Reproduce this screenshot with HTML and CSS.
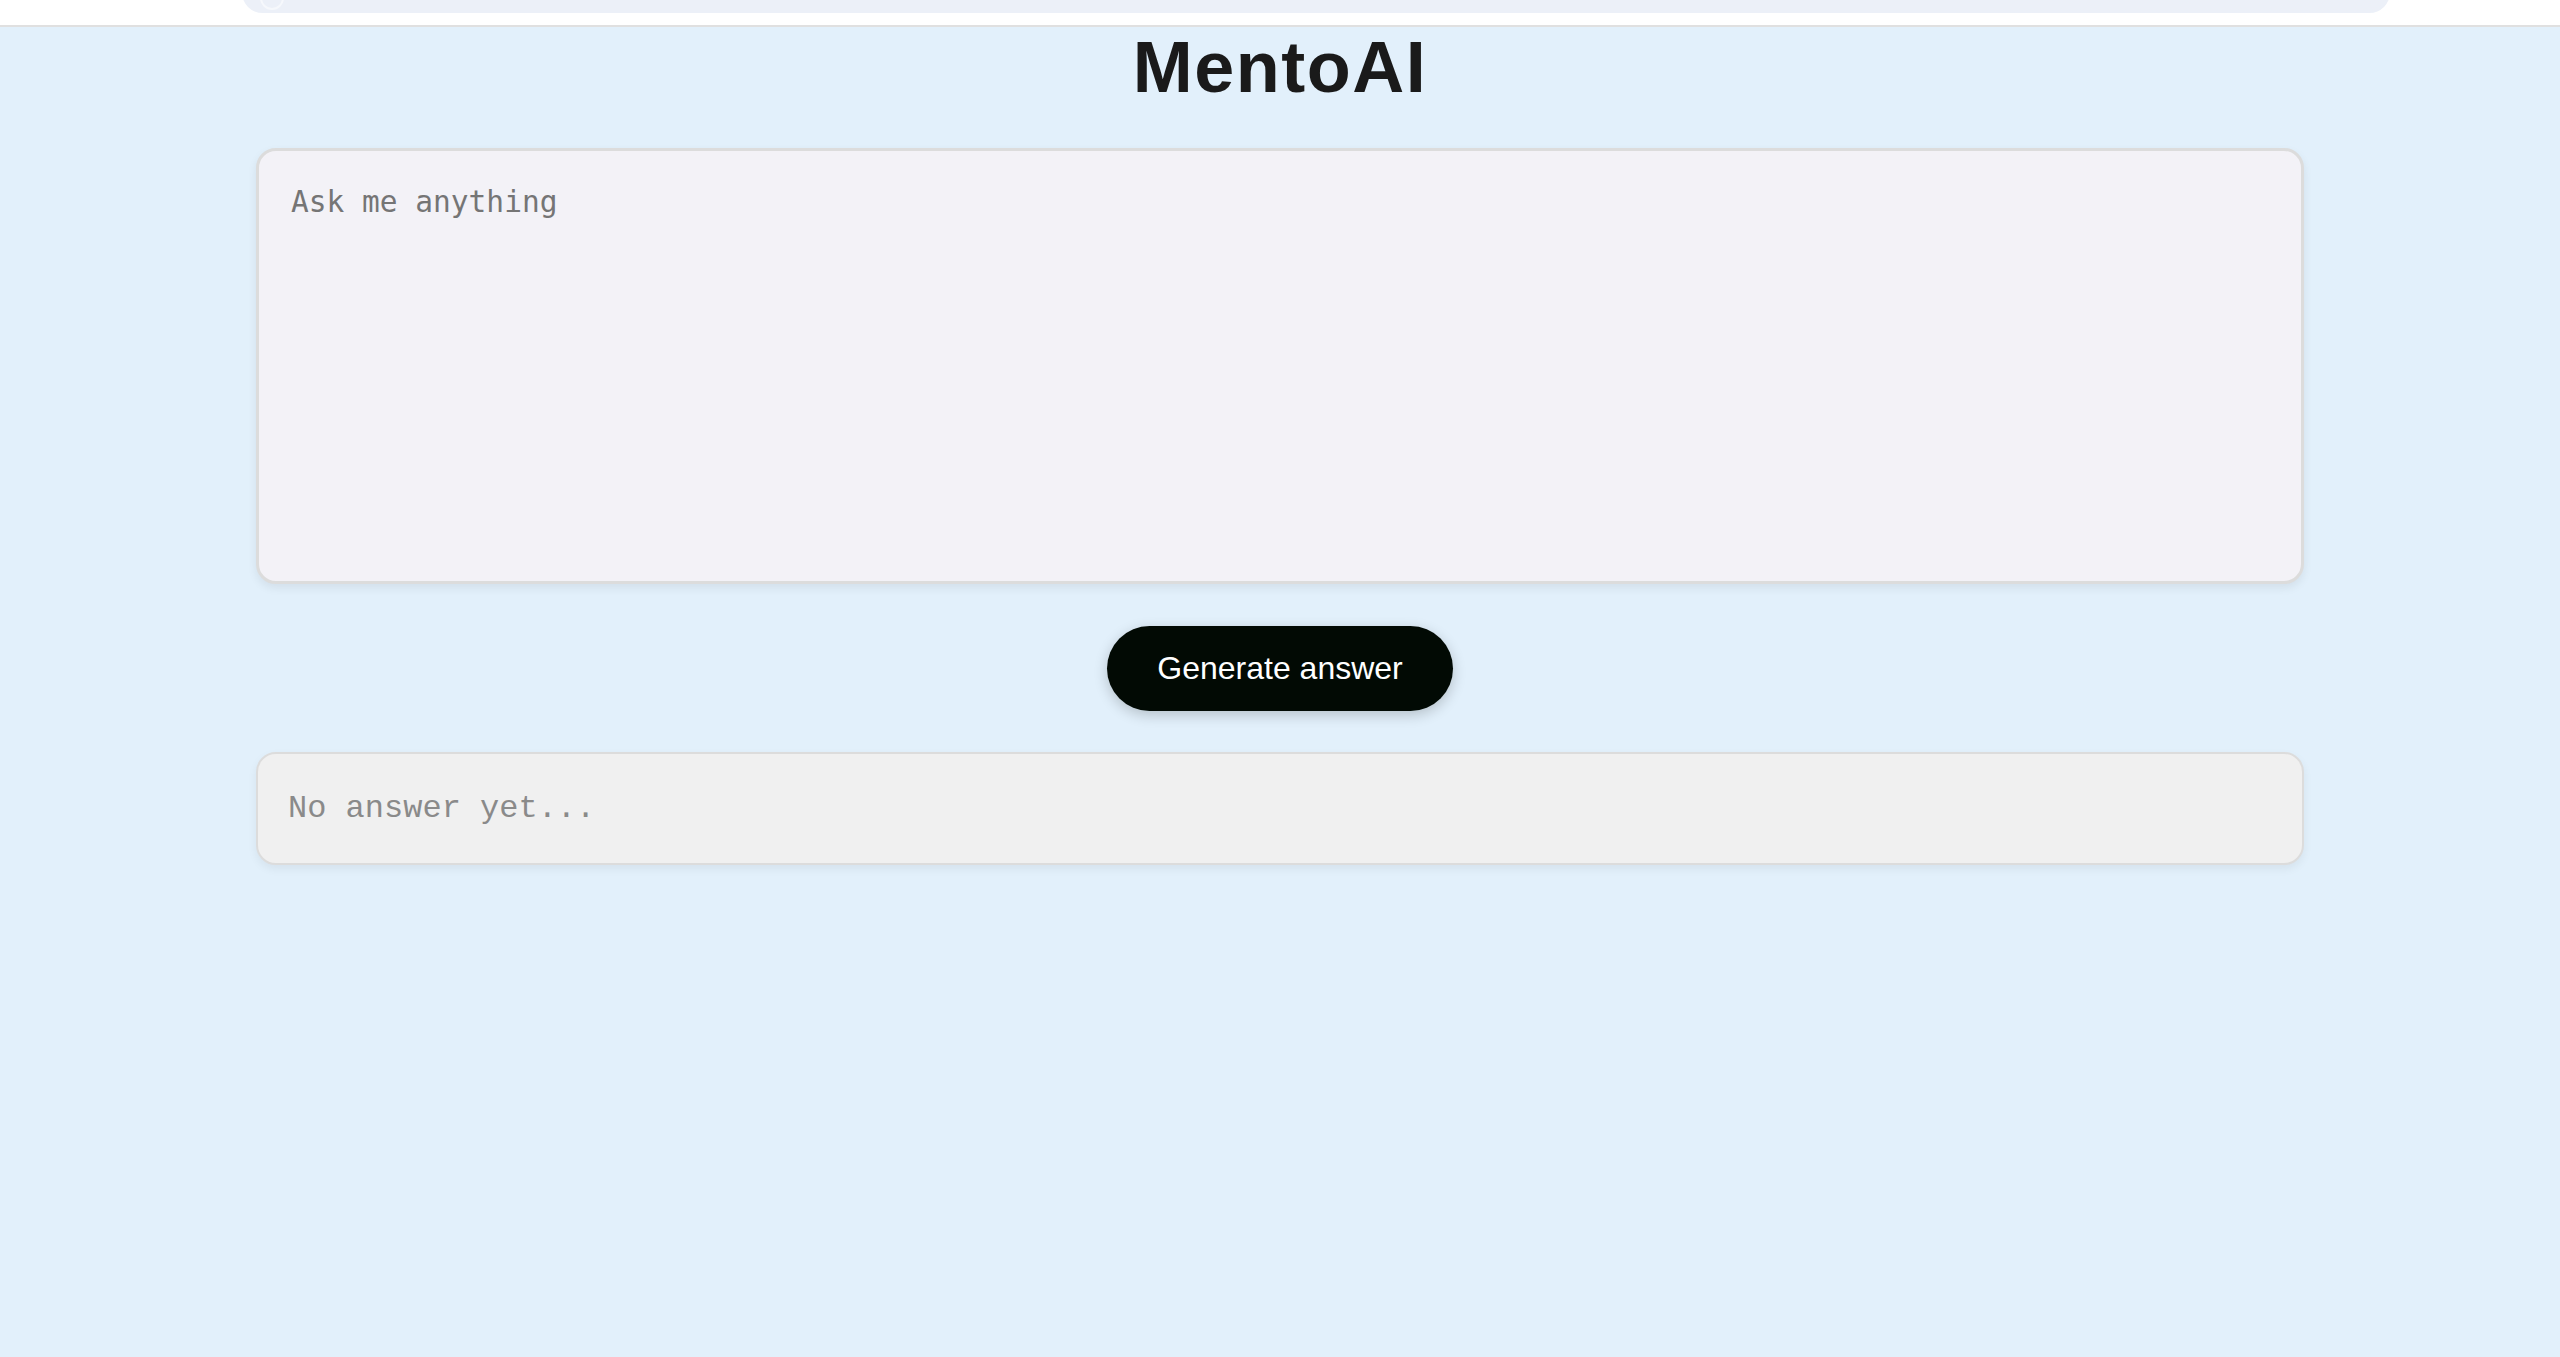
FILE: index.html
```html
<!DOCTYPE html>
<html lang="en">
<head>
<meta charset="utf-8">
<title>MentoAI</title>
<link rel="stylesheet" href="styles.css">
</head>
<body>
<header class="topbar">
  <div class="search-pill"><span class="search-dot"></span></div>
</header>
<main class="app">
  <h1 class="title">MentoAI</h1>
  <textarea class="question" placeholder="Ask me anything"></textarea>
  <button class="generate" type="button">Generate answer</button>
  <div class="answer">No answer yet...</div>
</main>
</body>
</html>
```
FILE: styles.css
```css
html, body {
  margin: 0;
  padding: 0;
}
body {
  background: #e2f0fb;
  min-height: 100vh;
  font-family: "Liberation Sans", Arial, sans-serif;
}
.topbar {
  height: 25px;
  background: #ffffff;
  border-bottom: 2px solid #e0e0e0;
  overflow: hidden;
}
.search-pill {
  margin-left: 242px;
  margin-top: -28px;
  width: 2148px;
  height: 41px;
  background: #ecf0f8;
  border-radius: 24px;
  position: relative;
}
.search-dot {
  position: absolute;
  left: 18px;
  top: 14px;
  width: 24px;
  height: 24px;
  border-radius: 50%;
  border: 2px solid #f6f8fc;
  box-sizing: border-box;
}
.app {
  display: flex;
  flex-direction: column;
  align-items: center;
}
.title {
  margin: 0 0 41px;
  font-family: "Liberation Sans", Arial, sans-serif;
  font-weight: 700;
  font-size: 72px;
  line-height: 80px;
  color: #1a1a1a;
  letter-spacing: 1.5px;
}
.question {
  box-sizing: border-box;
  width: 80%;
  height: 436px;
  margin: 0;
  padding: 34px 32px 32px;
  border: 3px solid #dcdcdc;
  border-radius: 20px;
  background: #f3f2f7;
  font-family: "DejaVu Sans Mono", monospace;
  font-size: 29.5px;
  color: #333333;
  resize: none;
  outline: none;
  box-shadow: 0 4px 10px rgba(0, 0, 0, 0.07);
}
.question::placeholder {
  color: #757575;
}
.generate {
  margin-top: 42px;
  height: 85px;
  padding: 0 50px;
  border: none;
  border-radius: 43px;
  background: #020a04;
  color: #ffffff;
  font-family: "Liberation Sans", Arial, sans-serif;
  font-size: 32px;
  box-shadow: 0 4px 14px rgba(0, 0, 0, 0.2);
  cursor: pointer;
}
.answer {
  box-sizing: border-box;
  width: 80%;
  height: 113px;
  margin-top: 41px;
  padding: 0 30px;
  display: flex;
  align-items: center;
  border: 2px solid #dcdcdc;
  border-radius: 20px;
  background: #f0f0f0;
  font-family: "Liberation Mono", "Courier New", monospace;
  font-size: 32px;
  color: #8a8a8a;
  box-shadow: 0 4px 10px rgba(0, 0, 0, 0.06);
}
```
